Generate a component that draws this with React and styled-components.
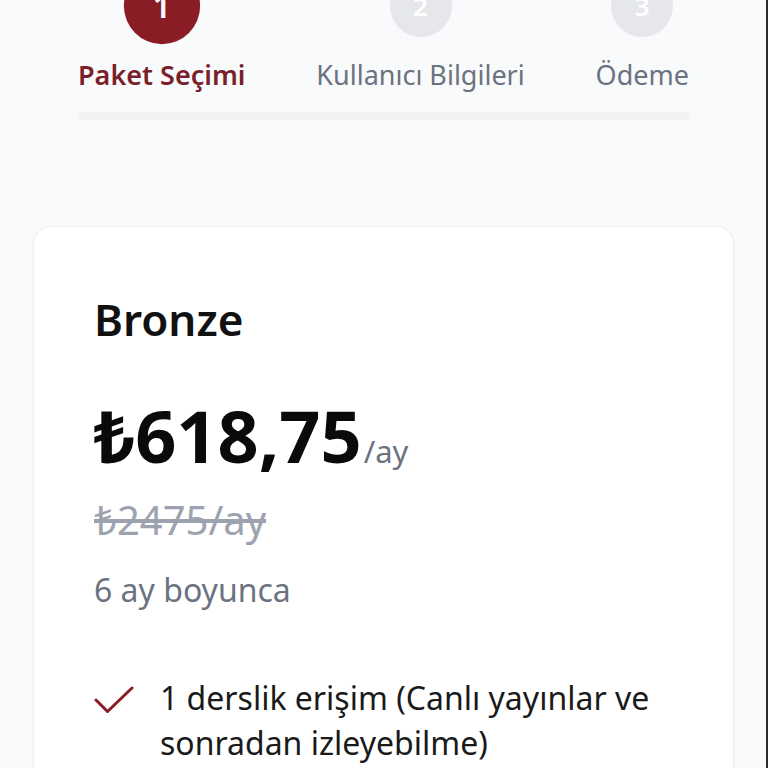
import styled, { createGlobalStyle } from "styled-components";

const maroon = "#8a1c26";
const labelMaroon = "#7a1f2b";
const gray = "#6b7280";
const lightGray = "#9ca3af";

const GlobalStyle = createGlobalStyle`
    html, body {
        margin: 0;
        padding: 0;
        background: #f9fafb;
        font-family: "Noto Sans", "Open Sans", sans-serif;
        overflow: hidden;
    }
`;

const steps = [
    { n: 1, label: "Paket Seçimi" },
    { n: 2, label: "Kullanıcı Bilgileri" },
    { n: 3, label: "Ödeme" },
];

const features = ["1 derslik erişim (Canlı yayınlar ve sonradan izleyebilme)"];

const CheckIcon = () => (
    <svg width="40" height="28" viewBox="0 0 40 28" fill="none">
        <path d="M2 14 L13.5 25.5 L38 2" stroke={maroon} strokeWidth="3" strokeLinecap="round" strokeLinejoin="round" />
    </svg>
);

export default function App() {
    return (
        <>
            <GlobalStyle />
            <Page>
                <Stepper>
                    {steps.map(s => (
                        <Step key={s.n}>
                            <Circle $active={s.n === 1}>{s.n}</Circle>
                            <StepLabel $active={s.n === 1}>{s.label}</StepLabel>
                        </Step>
                    ))}
                </Stepper>
                <Track />
                <Card>
                    <Title>Bronze</Title>
                    <PriceRow>
                        <Price>₺618,75</Price>
                        <Per>/ay</Per>
                    </PriceRow>
                    <OldPrice>₺2475/ay</OldPrice>
                    <Duration>6 ay boyunca</Duration>
                    <Features>
                        {features.map(f => (
                            <Feature key={f}>
                                <CheckWrap><CheckIcon /></CheckWrap>
                                <span>{f}</span>
                            </Feature>
                        ))}
                    </Features>
                </Card>
            </Page>
        </>
    );
}

const Page = styled.div`
    min-height: 100vh;
    box-sizing: border-box;
    padding: 0 32px 0 33px;
    border-right: 2px solid #2b2b2b;
    display: flex;
    flex-direction: column;
`;

const Stepper = styled.div`
    margin: -25px 45px 0 45px;
    display: flex;
    justify-content: space-between;
    align-items: flex-start;
`;

const Step = styled.div`
    display: flex;
    flex-direction: column;
    align-items: center;
    gap: 20px;
`;

const Circle = styled.div`
    width: 62px;
    height: 62px;
    border-radius: 50%;
    display: flex;
    align-items: center;
    justify-content: center;
    font-size: 26px;
    font-weight: 600;
    color: #fff;
    background: ${p => (p.$active ? maroon : "#e5e7eb")};
    transform: ${p => (p.$active ? "scale(1.23)" : "none")};
`;

const StepLabel = styled.div`
    font-size: 27px;
    line-height: 1.3;
    white-space: nowrap;
    font-weight: ${p => (p.$active ? 600 : 400)};
    color: ${p => (p.$active ? labelMaroon : gray)};
`;

const Track = styled.div`
    margin: 20px 44px 0 45px;
    height: 8px;
    border-radius: 4px;
    background: #f1f2f4;
`;

const Card = styled.div`
    margin-top: 106px;
    background: #fff;
    border: 1px solid #eceef1;
    border-radius: 18px;
    box-shadow: 0 1px 4px rgba(0, 0, 0, 0.04);
    padding: 66px 60px 40px 60px;
    display: flex;
    flex-direction: column;
`;

const Title = styled.h2`
    margin: 0;
    font-size: 44px;
    line-height: 1.2;
    font-weight: 600;
    color: #111;
`;

const PriceRow = styled.div`
    margin-top: 50px;
    display: flex;
    align-items: baseline;
`;

const Price = styled.span`
    font-size: 72px;
    line-height: 1.1;
    font-weight: 700;
    color: #0a0a0a;
`;

const Per = styled.span`
    font-size: 31px;
    color: ${gray};
    margin-left: 2px;
`;

const OldPrice = styled.div`
    margin-top: 19px;
    font-size: 40px;
    line-height: 1.3;
    color: ${lightGray};
    text-decoration: line-through;
`;

const Duration = styled.div`
    margin-top: 22px;
    font-size: 32px;
    line-height: 1.4;
    color: ${gray};
`;

const Features = styled.ul`
    list-style: none;
    margin: 63px 0 0 0;
    padding: 0;
`;

const Feature = styled.li`
    display: flex;
    align-items: flex-start;
    gap: 26px;
    font-size: 32px;
    line-height: 1.4;
    color: #1a1a1a;
`;

const CheckWrap = styled.span`
    flex: none;
    margin-top: 10px;
    display: flex;
`;
